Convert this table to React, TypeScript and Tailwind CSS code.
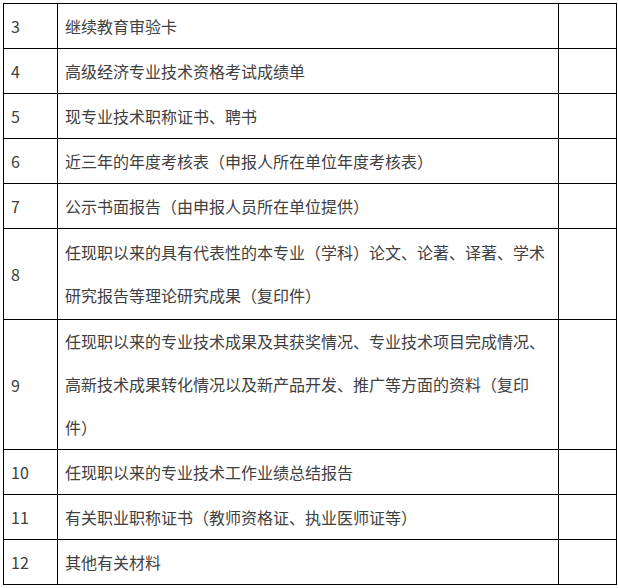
const rows: { no: string; text: string; h: string }[] = [
  { no: "3", text: "继续教育审验卡", h: "h-[45px]" },
  { no: "4", text: "高级经济专业技术资格考试成绩单", h: "h-[45px]" },
  { no: "5", text: "现专业技术职称证书、聘书", h: "h-[45px]" },
  { no: "6", text: "近三年的年度考核表（申报人所在单位年度考核表）", h: "h-[45px]" },
  { no: "7", text: "公示书面报告（由申报人员所在单位提供）", h: "h-[45px]" },
  {
    no: "8",
    text: "任现职以来的具有代表性的本专业（学科）论文、论著、译著、学术研究报告等理论研究成果（复印件）",
    h: "h-[91px]",
  },
  {
    no: "9",
    text: "任现职以来的专业技术成果及其获奖情况、专业技术项目完成情况、高新技术成果转化情况以及新产品开发、推广等方面的资料（复印件）",
    h: "h-[130px]",
  },
  { no: "10", text: "任现职以来的专业技术工作业绩总结报告", h: "h-[45px]" },
  { no: "11", text: "有关职业职称证书（教师资格证、执业医师证等）", h: "h-[45px]" },
  { no: "12", text: "其他有关材料", h: "h-[45px]" },
];

export default function App() {
  return (
    <div
      lang="zh-CN"
      className="min-h-[588px] w-[618px] bg-white pl-[3px] pt-[3px] text-[16px] text-[#404040]"
      style={{ fontFamily: '"Noto Sans CJK SC", "Noto Sans", sans-serif' }}
    >
      <div className="grid w-[614px] grid-cols-[54px_501px_58px] border-l border-t border-black">
        {rows.map((r) => (
          <div key={r.no} className="contents">
            <div className={`${r.h} flex items-center border-b border-r border-black pl-[7px]`}>
              {r.no}
            </div>
            <div className={`${r.h} flex items-center border-b border-r border-black pl-[7px] pr-[10px] leading-[43px]`}>
              <span>{r.text}</span>
            </div>
            <div className={`${r.h} border-b border-r border-black`} />
          </div>
        ))}
      </div>
    </div>
  );
}
